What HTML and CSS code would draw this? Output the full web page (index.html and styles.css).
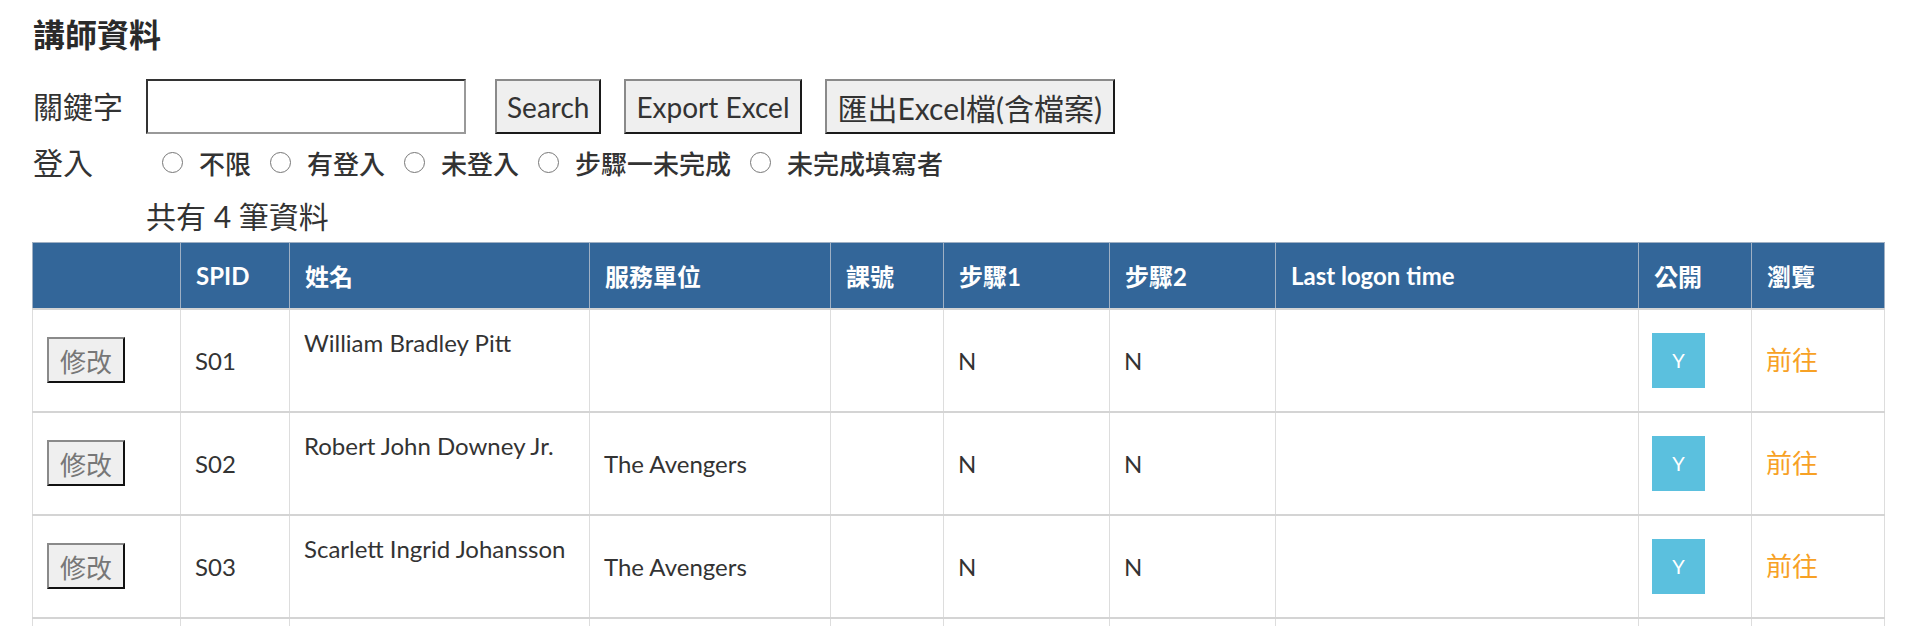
FILE: index.html
```html
<!DOCTYPE html>
<html lang="zh-Hant">
<head>
  <meta charset="UTF-8">
  <meta name="viewport" content="width=device-width, initial-scale=1.0">
  <title>講師資料</title>
  <link rel="stylesheet" href="styles.css">
</head>
<body>

  <div class="page">
    <h1 class="title">講師資料</h1>

    <!-- Search Form -->
    <div class="search-form">
      <div class="form-label">關鍵字</div>
      <div class="form-field">
        <input type="text" class="keyword-input">
        <button class="btn btn-search">Search</button>
        <button class="btn">Export Excel</button>
        <button class="btn btn-files">匯出Excel檔(含檔案)</button>
      </div>

      <div class="form-label login-label">登入</div>
      <div class="form-field radio-group">
        <label class="radio-option"><span class="radio"></span>不限</label>
        <label class="radio-option"><span class="radio"></span>有登入</label>
        <label class="radio-option"><span class="radio"></span>未登入</label>
        <label class="radio-option"><span class="radio"></span>步驟一未完成</label>
        <label class="radio-option"><span class="radio"></span>未完成填寫者</label>
      </div>

      <div></div>
      <div class="record-count">共有 4 筆資料</div>
    </div>

    <!-- Teacher Table -->
    <table class="data-table">
      <colgroup>
        <col style="width: 148px">
        <col style="width: 109px">
        <col style="width: 300px">
        <col style="width: 241px">
        <col style="width: 113px">
        <col style="width: 166px">
        <col style="width: 166px">
        <col style="width: 363px">
        <col style="width: 113px">
        <col style="width: 133px">
      </colgroup>
      <thead>
        <tr>
          <th></th>
          <th>SPID</th>
          <th>姓名</th>
          <th>服務單位</th>
          <th>課號</th>
          <th>步驟1</th>
          <th>步驟2</th>
          <th>Last logon time</th>
          <th>公開</th>
          <th>瀏覽</th>
        </tr>
      </thead>
      <tbody>
        <tr>
          <td><button class="btn-edit">修改</button></td>
          <td>S01</td>
          <td class="name-cell">William Bradley Pitt</td>
          <td></td>
          <td></td>
          <td>N</td>
          <td>N</td>
          <td></td>
          <td><span class="badge">Y</span></td>
          <td><a class="link-go">前往</a></td>
        </tr>
        <tr>
          <td><button class="btn-edit">修改</button></td>
          <td>S02</td>
          <td class="name-cell">Robert John Downey Jr.</td>
          <td>The Avengers</td>
          <td></td>
          <td>N</td>
          <td>N</td>
          <td></td>
          <td><span class="badge">Y</span></td>
          <td><a class="link-go">前往</a></td>
        </tr>
        <tr>
          <td><button class="btn-edit">修改</button></td>
          <td>S03</td>
          <td class="name-cell">Scarlett Ingrid Johansson</td>
          <td>The Avengers</td>
          <td></td>
          <td>N</td>
          <td>N</td>
          <td></td>
          <td><span class="badge">Y</span></td>
          <td><a class="link-go">前往</a></td>
        </tr>
        <tr>
          <td><button class="btn-edit">修改</button></td>
          <td>S04</td>
          <td class="name-cell">Chris Hemsworth</td>
          <td>The Avengers</td>
          <td></td>
          <td>N</td>
          <td>N</td>
          <td></td>
          <td><span class="badge">Y</span></td>
          <td><a class="link-go">前往</a></td>
        </tr>
      </tbody>
    </table>
  </div>

</body>
</html>
```

FILE: styles.css
```css
/* Basic Reset */
* {
  margin: 0;
  padding: 0;
  box-sizing: border-box;
}

body {
  background-color: #fff;
  color: #333;
  font-family: 'Lato', 'Noto Sans CJK TC', sans-serif;
  font-size: 24px;
}

.page {
  padding: 12px 36px 0 32px;
}

/* Title */
.title {
  font-size: 32px;
  font-weight: bold;
  line-height: 46px;
  margin: 0 0 21px 1px;
  color: #2a2a2a;
}

/* Search Form */
.search-form {
  display: grid;
  grid-template-columns: 114px auto;
  align-items: center;
}

.form-label {
  font-size: 30px;
  line-height: 55px;
  padding-left: 1px;
  color: #333;
}

.form-field {
  display: flex;
  align-items: center;
}

.keyword-input {
  width: 320px;
  height: 55px;
  border: 2px solid;
  border-color: #333 #999 #999 #333;
  background: #fff;
  margin-right: 29px;
}

.btn {
  height: 55px;
  padding: 0 10px;
  font-family: 'Lato', 'Noto Sans CJK TC', sans-serif;
  font-size: 28px;
  color: #333;
  background-color: #efefef;
  border: 2px solid;
  border-color: #8a8a8a #1a1a1a #1a1a1a #8a8a8a;
  margin-right: 23px;
}

.btn-files {
  font-size: 30px;
  padding: 0 11px;
}

.login-label {
  line-height: 40px;
  margin-top: 8px;
}

.radio-group {
  margin-top: 8px;
  height: 40px;
  padding-left: 16px;
  gap: 19px;
}

.radio-option {
  display: flex;
  align-items: center;
  gap: 16px;
  font-size: 26px;
  font-weight: 500;
  color: #333;
}

.radio {
  flex-shrink: 0;
  display: inline-block;
  width: 21px;
  height: 21px;
  border: 1.5px solid #777;
  border-radius: 50%;
}

.record-count {
  font-size: 30px;
  line-height: 40px;
  margin: 14px 0 6px;
  color: #333;
}

/* Data Table */
.data-table {
  width: 1852px;
  border-collapse: collapse;
  table-layout: fixed;
}

.data-table th {
  height: 66px;
  padding: 0 15px;
  background-color: #336699;
  color: #fff;
  font-size: 24px;
  font-weight: bold;
  text-align: left;
  border: 1px solid #9fb0c4;
}

.data-table td {
  height: 103px;
  padding: 0 14px;
  vertical-align: middle;
  border: 1px solid #ddd;
  border-top: 2px solid #d4d4d4;
  font-size: 24px;
  line-height: 37px;
  color: #333;
}

.data-table td.name-cell {
  vertical-align: top;
  padding-top: 14px;
}

.btn-edit {
  width: 78px;
  height: 46px;
  font-family: 'Lato', 'Noto Sans CJK TC', sans-serif;
  font-size: 26px;
  color: #777;
  background-color: #efefef;
  border: 2px solid;
  border-color: #8a8a8a #111 #111 #8a8a8a;
}

.badge {
  display: flex;
  justify-content: center;
  align-items: center;
  width: 53px;
  height: 55px;
  background-color: #5bc0de;
  color: #fff;
  font-size: 20px;
  margin-left: -1px;
}

.link-go {
  color: #f7a125;
  font-size: 26px;
  cursor: pointer;
}
```
